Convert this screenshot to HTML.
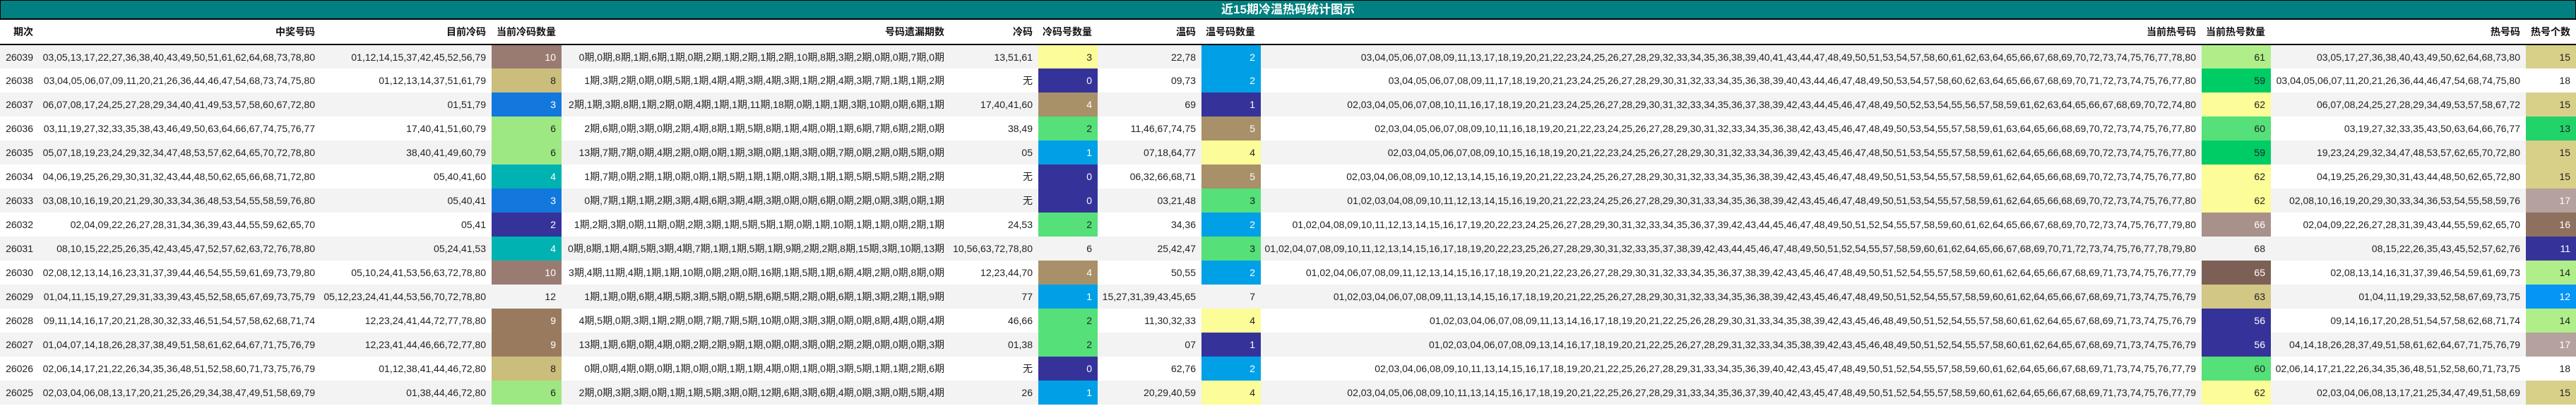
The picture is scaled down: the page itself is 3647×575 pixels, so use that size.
<!DOCTYPE html>
<html><head><meta charset="utf-8"><style>
*{margin:0;padding:0;box-sizing:border-box}
body{width:3647px;height:575px;background:#fff;font-family:"Liberation Sans","Noto Sans CJK SC",sans-serif;font-size:14px;color:#222;overflow:hidden}
.title{height:28px;background:#008080;border:1px solid #000;border-bottom:2px solid #000;color:#fff;font-weight:bold;font-size:17px;text-align:center;line-height:25px;font-family:"Liberation Sans","Noto Sans CJK SC",sans-serif}
table{border-collapse:collapse;table-layout:fixed;width:3647px}
td,th{padding:0 8px 0 0;text-align:right;white-space:nowrap;overflow:hidden;height:34px}
th{height:35px;font-weight:bold;border-bottom:2px solid #000;background:#fff;color:#111}
tr.o td{background:#f3f3f3}
tr td.c{color:#fff}
.br{background:#9a7b72!important}.kh{background:#cbbd7c!important}.bl{background:#1378dd!important}
.lg{background:#9de883!important}.tl{background:#00b2b2!important}.nv{background:#353399!important}
.bw{background:#9a7a5e!important}.ye{background:#fcfc99!important}.sk{background:#00a0e6!important}
.tn{background:#a89068!important}.gr{background:#56e07a!important}.g2{background:#b0ee8a!important}
.dg{background:#00cc66!important}.mv{background:#a8918a!important}.db{background:#7d6055!important}
.k2{background:#d3c785!important}.k3{background:#d8cf88!important}.g3{background:#22d36a!important}
.pm{background:#b5a19d!important}.bm{background:#8e705e!important}.b2{background:#0595f5!important}
</style></head><body>
<div class="title">近15期冷温热码统计图示</div>
<table>
<colgroup><col style="width:55px"><col style="width:399px"><col style="width:242px"><col style="width:99px"><col style="width:550px"><col style="width:125px"><col style="width:84px"><col style="width:147px"><col style="width:84px"><col style="width:1332px"><col style="width:98px"><col style="width:361px"><col style="width:71px"></colgroup>
<tr><th>期次</th><th>中奖号码</th><th>目前冷码</th><th>当前冷码数量</th><th>号码遗漏期数</th><th>冷码</th><th>冷码号数量</th><th>温码</th><th>温号码数量</th><th>当前热号码</th><th>当前热号数量</th><th>热号码</th><th>热号个数</th></tr>
<tr class="o"><td>26039</td><td>03,05,13,17,22,27,36,38,40,43,49,50,51,61,62,64,68,73,78,80</td><td>01,12,14,15,37,42,45,52,56,79</td><td class="c br">10</td><td>0期,0期,8期,1期,6期,1期,0期,2期,1期,2期,1期,2期,10期,8期,3期,2期,0期,0期,7期,0期</td><td>13,51,61</td><td class="ye">3</td><td>22,78</td><td class="c sk">2</td><td>03,04,05,06,07,08,09,11,13,17,18,19,20,21,22,23,24,25,26,27,28,29,32,33,34,35,36,38,39,40,41,43,44,47,48,49,50,51,53,54,57,58,60,61,62,63,64,65,66,67,68,69,70,72,73,74,75,76,77,78,80</td><td class="g2">61</td><td>03,05,17,27,36,38,40,43,49,50,62,64,68,73,80</td><td class="k3">15</td></tr>
<tr><td>26038</td><td>03,04,05,06,07,09,11,20,21,26,36,44,46,47,54,68,73,74,75,80</td><td>01,12,13,14,37,51,61,79</td><td class="kh">8</td><td>1期,3期,2期,0期,0期,5期,1期,4期,4期,3期,4期,3期,1期,2期,4期,3期,7期,1期,1期,2期</td><td>无</td><td class="c nv">0</td><td>09,73</td><td class="c sk">2</td><td>03,04,05,06,07,08,09,11,17,18,19,20,21,23,24,25,26,27,28,29,30,31,32,33,34,35,36,38,39,40,43,44,46,47,48,49,50,53,54,57,58,60,62,63,64,65,66,67,68,69,70,71,72,73,74,75,76,77,80</td><td class="dg">59</td><td>03,04,05,06,07,11,20,21,26,36,44,46,47,54,68,74,75,80</td><td>18</td></tr>
<tr class="o"><td>26037</td><td>06,07,08,17,24,25,27,28,29,34,40,41,49,53,57,58,60,67,72,80</td><td>01,51,79</td><td class="c bl">3</td><td>2期,1期,3期,8期,1期,2期,0期,4期,1期,1期,11期,18期,0期,1期,1期,3期,10期,0期,6期,1期</td><td>17,40,41,60</td><td class="c tn">4</td><td>69</td><td class="c nv">1</td><td>02,03,04,05,06,07,08,10,11,16,17,18,19,20,21,23,24,25,26,27,28,29,30,31,32,33,34,35,36,37,38,39,42,43,44,45,46,47,48,49,50,52,53,54,55,56,57,58,59,61,62,63,64,65,66,67,68,69,70,72,74,80</td><td class="ye">62</td><td>06,07,08,24,25,27,28,29,34,49,53,57,58,67,72</td><td class="k3">15</td></tr>
<tr><td>26036</td><td>03,11,19,27,32,33,35,38,43,46,49,50,63,64,66,67,74,75,76,77</td><td>17,40,41,51,60,79</td><td class="lg">6</td><td>2期,6期,0期,3期,0期,2期,4期,8期,1期,5期,8期,1期,4期,0期,1期,6期,7期,6期,2期,0期</td><td>38,49</td><td class="gr">2</td><td>11,46,67,74,75</td><td class="c tn">5</td><td>02,03,04,05,06,07,08,09,10,11,16,18,19,20,21,22,23,24,25,26,27,28,29,30,31,32,33,34,35,36,38,42,43,45,46,47,48,49,50,53,54,55,57,58,59,61,63,64,65,66,68,69,70,72,73,74,75,76,77,80</td><td class="gr">60</td><td>03,19,27,32,33,35,43,50,63,64,66,76,77</td><td class="g3">13</td></tr>
<tr class="o"><td>26035</td><td>05,07,18,19,23,24,29,32,34,47,48,53,57,62,64,65,70,72,78,80</td><td>38,40,41,49,60,79</td><td class="lg">6</td><td>13期,7期,7期,0期,4期,2期,0期,0期,1期,3期,0期,1期,3期,0期,7期,0期,2期,0期,5期,0期</td><td>05</td><td class="c sk">1</td><td>07,18,64,77</td><td class="ye">4</td><td>02,03,04,05,06,07,08,09,10,15,16,18,19,20,21,22,23,24,25,26,27,28,29,30,31,32,33,34,36,39,42,43,45,46,47,48,50,51,53,54,55,57,58,59,61,62,64,65,66,68,69,70,72,73,74,75,76,77,80</td><td class="dg">59</td><td>19,23,24,29,32,34,47,48,53,57,62,65,70,72,80</td><td class="k3">15</td></tr>
<tr><td>26034</td><td>04,06,19,25,26,29,30,31,32,43,44,48,50,62,65,66,68,71,72,80</td><td>05,40,41,60</td><td class="c tl">4</td><td>1期,7期,0期,2期,1期,0期,0期,1期,5期,1期,1期,0期,3期,1期,1期,5期,5期,5期,2期,2期</td><td>无</td><td class="c nv">0</td><td>06,32,66,68,71</td><td class="c tn">5</td><td>02,03,04,06,08,09,10,12,13,14,15,16,19,20,21,22,23,24,25,26,27,28,29,30,31,32,33,34,35,36,38,39,42,43,45,46,47,48,49,50,51,53,54,55,57,58,59,61,62,64,65,66,68,69,70,72,73,74,75,76,77,80</td><td class="ye">62</td><td>04,19,25,26,29,30,31,43,44,48,50,62,65,72,80</td><td class="k3">15</td></tr>
<tr class="o"><td>26033</td><td>03,08,10,16,19,20,21,29,30,33,34,36,48,53,54,55,58,59,76,80</td><td>05,40,41</td><td class="c bl">3</td><td>0期,7期,1期,1期,2期,3期,4期,6期,3期,4期,3期,0期,0期,6期,0期,2期,0期,3期,0期,1期</td><td>无</td><td class="c nv">0</td><td>03,21,48</td><td class="gr">3</td><td>01,02,03,04,08,09,10,11,12,13,14,15,16,19,20,21,22,23,24,25,26,27,28,29,30,31,33,34,35,36,38,39,42,43,45,46,47,48,49,50,51,53,54,55,57,58,59,61,62,64,65,66,68,69,70,72,73,74,75,76,77,80</td><td class="ye">62</td><td>02,08,10,16,19,20,29,30,33,34,36,53,54,55,58,59,76</td><td class="c pm">17</td></tr>
<tr><td>26032</td><td>02,04,09,22,26,27,28,31,34,36,39,43,44,55,59,62,65,70</td><td>05,41</td><td class="c nv">2</td><td>1期,2期,3期,0期,11期,0期,2期,3期,1期,5期,5期,1期,0期,1期,10期,1期,1期,0期,2期,1期</td><td>24,53</td><td class="gr">2</td><td>34,36</td><td class="c sk">2</td><td>01,02,04,08,09,10,11,12,13,14,15,16,17,19,20,22,23,24,25,26,27,28,29,30,31,32,33,34,35,36,37,39,42,43,44,45,46,47,48,49,50,51,52,54,55,57,58,59,60,61,62,64,65,66,67,68,69,70,72,73,74,75,76,77,79,80</td><td class="c mv">66</td><td>02,04,09,22,26,27,28,31,39,43,44,55,59,62,65,70</td><td class="c bm">16</td></tr>
<tr class="o"><td>26031</td><td>08,10,15,22,25,26,35,42,43,45,47,52,57,62,63,72,76,78,80</td><td>05,24,41,53</td><td class="c tl">4</td><td>0期,8期,1期,4期,5期,3期,4期,7期,1期,1期,5期,1期,9期,2期,2期,8期,15期,3期,10期,13期</td><td>10,56,63,72,78,80</td><td>6</td><td>25,42,47</td><td class="gr">3</td><td>01,02,04,07,08,09,10,11,12,13,14,15,16,17,18,19,20,22,23,25,26,27,28,29,30,31,32,33,35,37,38,39,42,43,44,45,46,47,48,49,50,51,52,54,55,57,58,59,60,61,62,64,65,66,67,68,69,70,71,72,73,74,75,76,77,78,79,80</td><td>68</td><td>08,15,22,26,35,43,45,52,57,62,76</td><td class="c nv">11</td></tr>
<tr><td>26030</td><td>02,08,12,13,14,16,23,31,37,39,44,46,54,55,59,61,69,73,79,80</td><td>05,10,24,41,53,56,63,72,78,80</td><td class="c br">10</td><td>3期,4期,11期,4期,1期,1期,10期,0期,2期,0期,16期,1期,5期,1期,6期,4期,2期,0期,8期,0期</td><td>12,23,44,70</td><td class="c tn">4</td><td>50,55</td><td class="c sk">2</td><td>01,02,04,06,07,08,09,11,12,13,14,15,16,17,18,19,20,21,22,23,26,27,28,29,30,31,32,33,34,35,36,37,38,39,42,43,45,46,47,48,49,50,51,52,54,55,57,58,59,60,61,62,64,65,66,67,68,69,71,73,74,75,76,77,79</td><td class="c db">65</td><td>02,08,13,14,16,31,37,39,46,54,59,61,69,73</td><td class="g2">14</td></tr>
<tr class="o"><td>26029</td><td>01,04,11,15,19,27,29,31,33,39,43,45,52,58,65,67,69,73,75,79</td><td>05,12,23,24,41,44,53,56,70,72,78,80</td><td>12</td><td>1期,1期,0期,6期,4期,5期,3期,5期,0期,5期,6期,5期,2期,0期,6期,1期,3期,2期,1期,9期</td><td>77</td><td class="c sk">1</td><td>15,27,31,39,43,45,65</td><td>7</td><td>01,02,03,04,06,07,08,09,11,13,14,15,16,17,18,19,20,21,22,25,26,27,28,29,30,31,32,33,34,35,36,38,39,42,43,45,46,47,48,49,50,51,52,54,55,57,58,59,60,61,62,64,65,66,67,68,69,71,73,74,75,76,79</td><td class="k2">63</td><td>01,04,11,19,29,33,52,58,67,69,73,75</td><td class="c b2">12</td></tr>
<tr><td>26028</td><td>09,11,14,16,17,20,21,28,30,32,33,46,51,54,57,58,62,68,71,74</td><td>12,23,24,41,44,72,77,78,80</td><td class="c bw">9</td><td>4期,5期,0期,3期,1期,2期,0期,7期,7期,5期,10期,0期,3期,3期,0期,0期,8期,4期,0期,4期</td><td>46,66</td><td class="gr">2</td><td>11,30,32,33</td><td class="ye">4</td><td>01,02,03,04,06,07,08,09,11,13,14,16,17,18,19,20,21,22,25,26,28,29,30,31,33,34,35,38,39,42,43,45,46,48,49,50,51,52,54,55,57,58,60,61,62,64,65,67,68,69,71,73,74,75,76,79</td><td class="c nv">56</td><td>09,14,16,17,20,28,51,54,57,58,62,68,71,74</td><td class="g2">14</td></tr>
<tr class="o"><td>26027</td><td>01,04,07,14,18,26,28,37,38,49,51,58,61,62,64,67,71,75,76,79</td><td>12,23,41,44,46,66,72,77,80</td><td class="c bw">9</td><td>13期,1期,6期,0期,4期,0期,2期,2期,9期,1期,0期,0期,3期,0期,2期,2期,0期,0期,0期,3期</td><td>01,38</td><td class="gr">2</td><td>07</td><td class="c nv">1</td><td>01,02,03,04,06,07,08,09,13,14,16,17,18,19,20,21,22,25,26,27,28,29,31,32,33,34,35,38,39,42,43,45,46,48,49,50,51,52,54,55,57,58,60,61,62,64,65,67,68,69,71,73,74,75,76,79</td><td class="c nv">56</td><td>04,14,18,26,28,37,49,51,58,61,62,64,67,71,75,76,79</td><td class="c pm">17</td></tr>
<tr><td>26026</td><td>02,06,14,17,21,22,26,34,35,36,48,51,52,58,60,71,73,75,76,79</td><td>01,12,38,41,44,46,72,80</td><td class="kh">8</td><td>0期,0期,4期,0期,0期,1期,0期,0期,1期,1期,4期,0期,1期,0期,3期,5期,1期,1期,2期,6期</td><td>无</td><td class="c nv">0</td><td>62,76</td><td class="c sk">2</td><td>02,03,04,06,08,09,10,11,13,14,15,16,17,18,19,20,21,22,25,26,27,28,29,31,33,34,35,36,39,40,42,43,45,47,48,49,50,51,52,54,55,57,58,59,60,61,62,64,65,66,67,68,69,71,73,74,75,76,77,79</td><td class="gr">60</td><td>02,06,14,17,21,22,26,34,35,36,48,51,52,58,60,71,73,75</td><td>18</td></tr>
<tr class="o"><td>26025</td><td>02,03,04,06,08,13,17,20,21,25,26,29,34,38,47,49,51,58,69,79</td><td>01,38,44,46,72,80</td><td class="lg">6</td><td>2期,0期,3期,3期,0期,1期,1期,5期,3期,0期,12期,6期,3期,6期,4期,0期,3期,0期,5期,4期</td><td>26</td><td class="c sk">1</td><td>20,29,40,59</td><td class="ye">4</td><td>02,03,04,05,06,08,09,10,11,13,14,15,16,17,18,19,20,21,22,25,26,27,28,29,31,33,34,35,36,37,39,40,42,43,45,47,48,49,50,51,52,54,55,57,58,59,60,61,62,64,65,66,67,68,69,71,73,74,75,76,77,79</td><td class="ye">62</td><td>02,03,04,06,08,13,17,21,25,34,47,49,51,58,69</td><td class="k3">15</td></tr>
</table>
</body></html>
